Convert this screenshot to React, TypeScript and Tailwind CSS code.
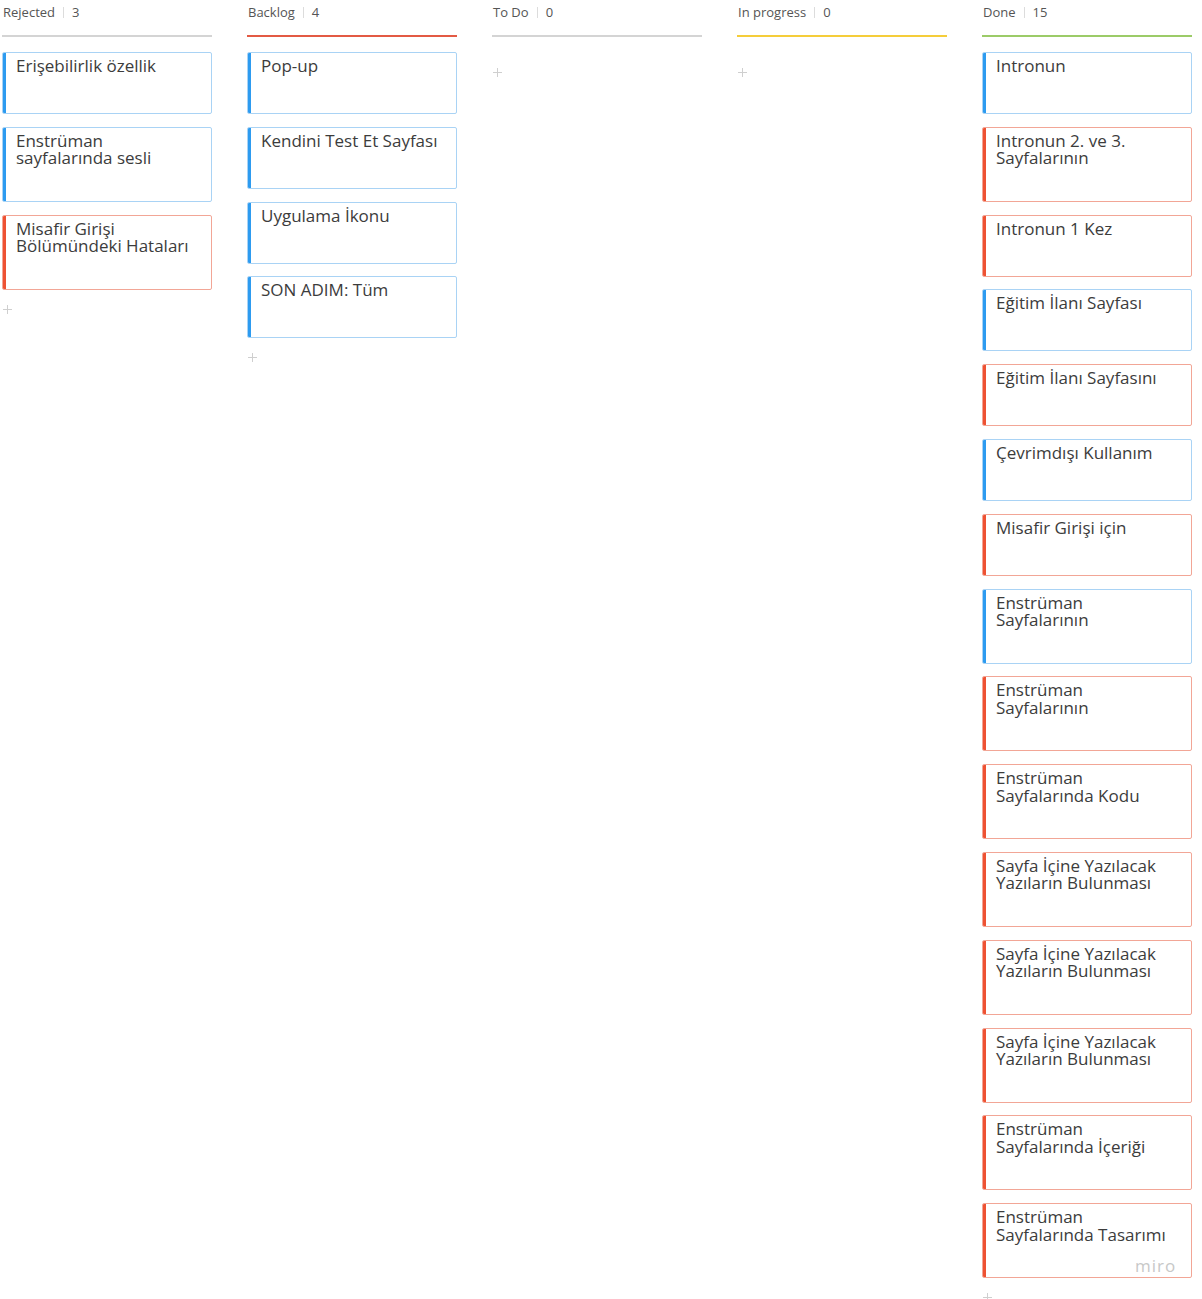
type Card = { text: string[]; color: "blue" | "red" };

type Column = {
  title: string;
  line: string;
  cards: Card[];
};

const b = (...text: string[]): Card => ({ text, color: "blue" });
const r = (...text: string[]): Card => ({ text, color: "red" });

const columns: Column[] = [
  {
    title: "Rejected",
    line: "bg-[#d4d4d4]",
    cards: [
      b("Erişebilirlik özellik"),
      b("Enstrüman", "sayfalarında sesli"),
      r("Misafir Girişi", "Bölümündeki Hataları"),
    ],
  },
  {
    title: "Backlog",
    line: "bg-[#e35a44]",
    cards: [
      b("Pop-up"),
      b("Kendini Test Et Sayfası"),
      b("Uygulama İkonu"),
      b("SON ADIM: Tüm"),
    ],
  },
  { title: "To Do", line: "bg-[#d4d4d4]", cards: [] },
  { title: "In progress", line: "bg-[#f5cd3a]", cards: [] },
  {
    title: "Done",
    line: "bg-[#9ccb68]",
    cards: [
      b("Intronun"),
      r("Intronun 2. ve 3.", "Sayfalarının"),
      r("Intronun 1 Kez"),
      b("Eğitim İlanı Sayfası"),
      r("Eğitim İlanı Sayfasını"),
      b("Çevrimdışı Kullanım"),
      r("Misafir Girişi için"),
      b("Enstrüman", "Sayfalarının"),
      r("Enstrüman", "Sayfalarının"),
      r("Enstrüman", "Sayfalarında Kodu"),
      r("Sayfa İçine Yazılacak", "Yazıların Bulunması"),
      r("Sayfa İçine Yazılacak", "Yazıların Bulunması"),
      r("Sayfa İçine Yazılacak", "Yazıların Bulunması"),
      r("Enstrüman", "Sayfalarında İçeriği"),
      r("Enstrüman", "Sayfalarında Tasarımı"),
    ],
  },
];

function CardBox({ card }: { card: Card }) {
  const blue = card.color === "blue";
  return (
    <div
      className={`flex rounded-[2px] border overflow-hidden bg-white ${
        blue ? "border-[#a9d3f5]" : "border-[#f2a696]"
      } ${card.text.length > 1 ? "h-[75px]" : "h-[62px]"}`}
    >
      <div className={`w-[3px] shrink-0 ${blue ? "bg-[#2d9bf0]" : "bg-[#ee5233]"}`} />
      <div className="pl-[10px] pt-[4px] text-[17px] leading-[17.5px] text-[#3c3c3c]">
        {card.text.map((t, i) => (
          <div key={i}>{t}</div>
        ))}
      </div>
    </div>
  );
}

function Plus({ className = "" }: { className?: string }) {
  return (
    <svg width="9" height="9" viewBox="0 0 9 9" className={className}>
      <path d="M4.5 0v9M0 4.5h9" stroke="#cfcfcf" strokeWidth="1" />
    </svg>
  );
}

export default function App() {
  return (
    <div
      className="relative w-[1202px] h-[1299px] overflow-hidden bg-white"
      style={{ fontFamily: '"Open Sans", "Noto Sans", sans-serif' }}
    >
      <div className="flex gap-[35px] pl-[2px]">
        {columns.map((col) => (
          <div key={col.title} className="w-[210px] shrink-0">
            {/* header */}
            <div className="flex items-center h-[24px] pt-[1px] pl-[1px] text-[13px] text-[#555]">
              <span>{col.title}</span>
              <span className="mx-[8px] w-px h-[11px] bg-[#dcdcdc]" />
              <span>{col.cards.length}</span>
            </div>
            <div className={`mt-[11px] h-[2px] ${col.line}`} />

            <div className="mt-[15px] flex flex-col gap-[12.8px]">
              {col.cards.map((c, i) => (
                <CardBox key={i} card={c} />
              ))}
            </div>
            <div className={`pl-[1px] ${col.cards.length ? "mt-[15px]" : "mt-[16px]"}`}>
              <Plus />
            </div>
          </div>
        ))}
      </div>

      {/* watermark */}
      <div className="absolute left-[1135px] top-[1253px] text-[17px] tracking-[1px] text-[#c8c8c8]">
        miro
      </div>
    </div>
  );
}
